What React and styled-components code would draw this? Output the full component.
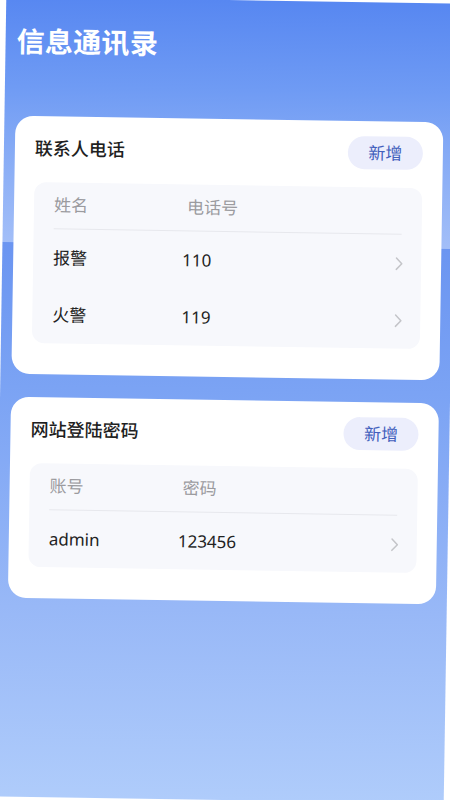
import React from "react";
import styled, { createGlobalStyle } from "styled-components";

const GlobalStyle = createGlobalStyle`
  html, body {
    margin: 0;
    padding: 0;
    background: #ffffff;
    overflow: hidden;
  }
  * { box-sizing: border-box; }
  body {
    font-family: "Noto Sans", "Noto Sans CJK SC", sans-serif;
  }
`;

const Screen = styled.div`
  width: 450px;
  height: 800px;
  transform: rotate(0.9deg);
  transform-origin: 50% 50%;
  padding: 25px 11px 0;
  background: linear-gradient(
    180deg,
    #5787f1 0px,
    #6f9bf4 90px,
    #85aaf5 150px,
    #a2bef8 245px,
    #6b95f1 246px,
    #7ba3f4 390px,
    #98b8f7 610px,
    #afccfb 800px
  );
  font-family: "Noto Sans", "Noto Sans CJK SC", sans-serif;
`;

const PageTitle = styled.h1`
  margin: 0 0 56px;
  font-size: 28px;
  line-height: 38px;
  font-weight: 700;
  color: #ffffff;
  letter-spacing: 0.3px;
`;

const Card = styled.section`
  background: #ffffff;
  border-radius: 18px;
  padding: 15px 20px 31px;
  & + & {
    margin-top: 23px;
  }
`;

const CardHeader = styled.div`
  display: flex;
  align-items: center;
  justify-content: space-between;
  height: 33px;
`;

const CardTitle = styled.h2`
  margin: 0;
  font-size: 18px;
  line-height: 24px;
  font-weight: 500;
  color: #1f1f1f;
`;

const AddButton = styled.button`
  width: 75px;
  height: 33px;
  border: none;
  border-radius: 17px;
  background: #eceefc;
  color: #4360bc;
  font-family: inherit;
  font-size: 17px;
  line-height: 33px;
  padding: 0;
  cursor: pointer;
`;

const Table = styled.div`
  margin-top: 18px;
  background: #f7f8fc;
  border-radius: 12px;
`;

const HeadRow = styled.div`
  display: flex;
  align-items: center;
  height: 46px;
  padding: 0 20px;
  font-size: 17px;
  color: #9b9b9f;
`;

const Divider = styled.div`
  height: 1px;
  margin: 0 20px;
  background: #e7e8ed;
`;

const Row = styled.div`
  display: flex;
  align-items: center;
  height: 57px;
  padding: 0 18px 0 20px;
  font-size: 17px;
  color: #222222;
`;

const Cell = styled.span`
  width: ${(p) => p.$w || "auto"};
  flex: ${(p) => (p.$w ? "none" : "1")};
  line-height: 24px;
`;

const Chevron = () => (
  <svg width="8" height="14" viewBox="0 0 8 14" fill="none">
    <path
      d="M1.2 1.3 L6.6 7 L1.2 12.7"
      stroke="#c4c5c9"
      strokeWidth="1.5"
      strokeLinecap="round"
      strokeLinejoin="round"
    />
  </svg>
);

const sections = [
  {
    title: "联系人电话",
    heads: ["姓名", "电话号"],
    rows: [
      ["报警", "110"],
      ["火警", "119"],
    ],
  },
  {
    title: "网站登陆密码",
    heads: ["账号", "密码"],
    rows: [["admin", "123456"]],
  },
];

export default function App() {
  return (
    <>
      <GlobalStyle />
      <Screen>
        <PageTitle>信息通讯录</PageTitle>
        {sections.map((s) => (
          <Card key={s.title}>
            <CardHeader>
              <CardTitle>{s.title}</CardTitle>
              <AddButton>新增</AddButton>
            </CardHeader>
            <Table>
              <HeadRow>
                <Cell $w="133px">{s.heads[0]}</Cell>
                <Cell>{s.heads[1]}</Cell>
              </HeadRow>
              <Divider />
              {s.rows.map((r) => (
                <Row key={r[0]}>
                  <Cell $w="129px">{r[0]}</Cell>
                  <Cell>{r[1]}</Cell>
                  <Chevron />
                </Row>
              ))}
            </Table>
          </Card>
        ))}
      </Screen>
    </>
  );
}
